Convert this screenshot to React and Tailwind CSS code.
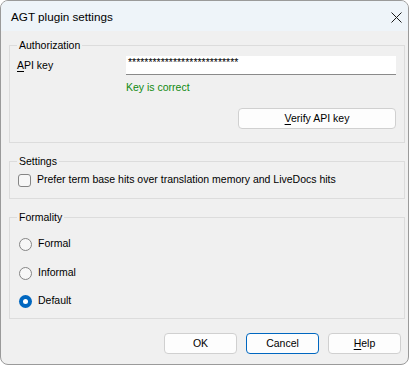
import React from "react";

function Btn({ children, focused, className = "" }) {
  return (
    <button
      className={
        "h-[21px] rounded-[4px] bg-[#fdfdfd] border text-[10.5px] leading-none text-black " +
        (focused ? "border-[#0067c0] " : "border-[#d0d0d0] ") +
        className
      }
    >
      {children}
    </button>
  );
}

function Radio({ checked, label, className = "" }) {
  return (
    <div className={"flex items-center h-[16px] " + className}>
      {checked ? (
        <span className="w-[13px] h-[13px] rounded-full bg-[#0067c0] flex items-center justify-center">
          <span className="w-[5px] h-[5px] rounded-full bg-white" />
        </span>
      ) : (
        <span className="w-[13px] h-[13px] rounded-full border border-[#858585] bg-[#f7f7f7]" />
      )}
      <span className="ml-[6px]">{label}</span>
    </div>
  );
}

export default function App() {
  return (
    <div className="w-[413px] h-[366px] bg-white font-['Liberation_Sans',sans-serif] text-[10.5px] text-black">
      <div className="w-[409px] h-[365px] border border-[#9a9a9a] rounded-[8px] overflow-hidden bg-[#f0f0f0] flex flex-col">
        {/* title bar */}
        <div className="h-[30px] bg-[#eef4f9] flex items-center justify-between shrink-0">
          <span className="ml-[10px] text-[11.7px] mt-[1px]">AGT plugin settings</span>
          <svg width="11" height="11" viewBox="0 0 11 11" className="mr-[6px] mt-[2px]">
            <path d="M0.5 0.5 L10.5 10.5 M10.5 0.5 L0.5 10.5" stroke="#1a1a1a" strokeWidth="1" />
          </svg>
        </div>

        <div className="pl-[8px] pt-[6px] flex flex-col">
          {/* Authorization */}
          <fieldset className="w-[396px] h-[106px] border border-[#dcdcdc]">
            <legend className="ml-[7px] px-[2px] leading-[16px]">Authorization</legend>
            <div className="flex items-center mt-[3px] pl-[7px]">
              <span className="w-[109px]">
                <span className="underline underline-offset-[2px]">A</span>PI key
              </span>
              <div className="w-[270px] h-[19px] bg-white border-b border-[#8a8a8a] pl-[2px] flex items-start overflow-hidden">
                <span className="leading-[12px] text-[10.5px]">***************************</span>
              </div>
            </div>
            <div className="ml-[116px] mt-[4px] leading-[16px] text-[#108a10]">Key is correct</div>
            <div className="flex justify-end pr-[8px] mt-[13px]">
              <Btn className="w-[158px]">
                <span className="underline underline-offset-[2px]">V</span>erify API key
              </Btn>
            </div>
          </fieldset>

          {/* Settings */}
          <fieldset className="w-[396px] h-[46px] mt-[10px] border border-[#dcdcdc]">
            <legend className="ml-[7px] px-[2px] leading-[16px]">Settings</legend>
            <div className="flex items-center h-[16px] mt-[3px] pl-[8px]">
              <span className="w-[13px] h-[13px] rounded-[3px] border border-[#858585] bg-[#f7f7f7]" />
              <span className="ml-[6px]">Prefer term base hits over translation memory and LiveDocs hits</span>
            </div>
          </fieldset>

          {/* Formality */}
          <fieldset className="w-[396px] h-[110px] mt-[10px] border border-[#dcdcdc]">
            <legend className="ml-[7px] px-[2px] leading-[16px]">Formality</legend>
            <div className="flex flex-col mt-[11px] pl-[9px]">
              <Radio label="Formal" />
              <Radio label="Informal" className="mt-[13px]" />
              <Radio checked label="Default" className="mt-[12px]" />
            </div>
          </fieldset>
        </div>

        <div className="flex justify-end gap-[9px] pr-[7px] mt-[14px]">
          <Btn className="w-[73px]">OK</Btn>
          <Btn focused className="w-[73px]">Cancel</Btn>
          <Btn className="w-[73px]">
            <span className="underline underline-offset-[2px]">H</span>elp
          </Btn>
        </div>
      </div>
    </div>
  );
}
